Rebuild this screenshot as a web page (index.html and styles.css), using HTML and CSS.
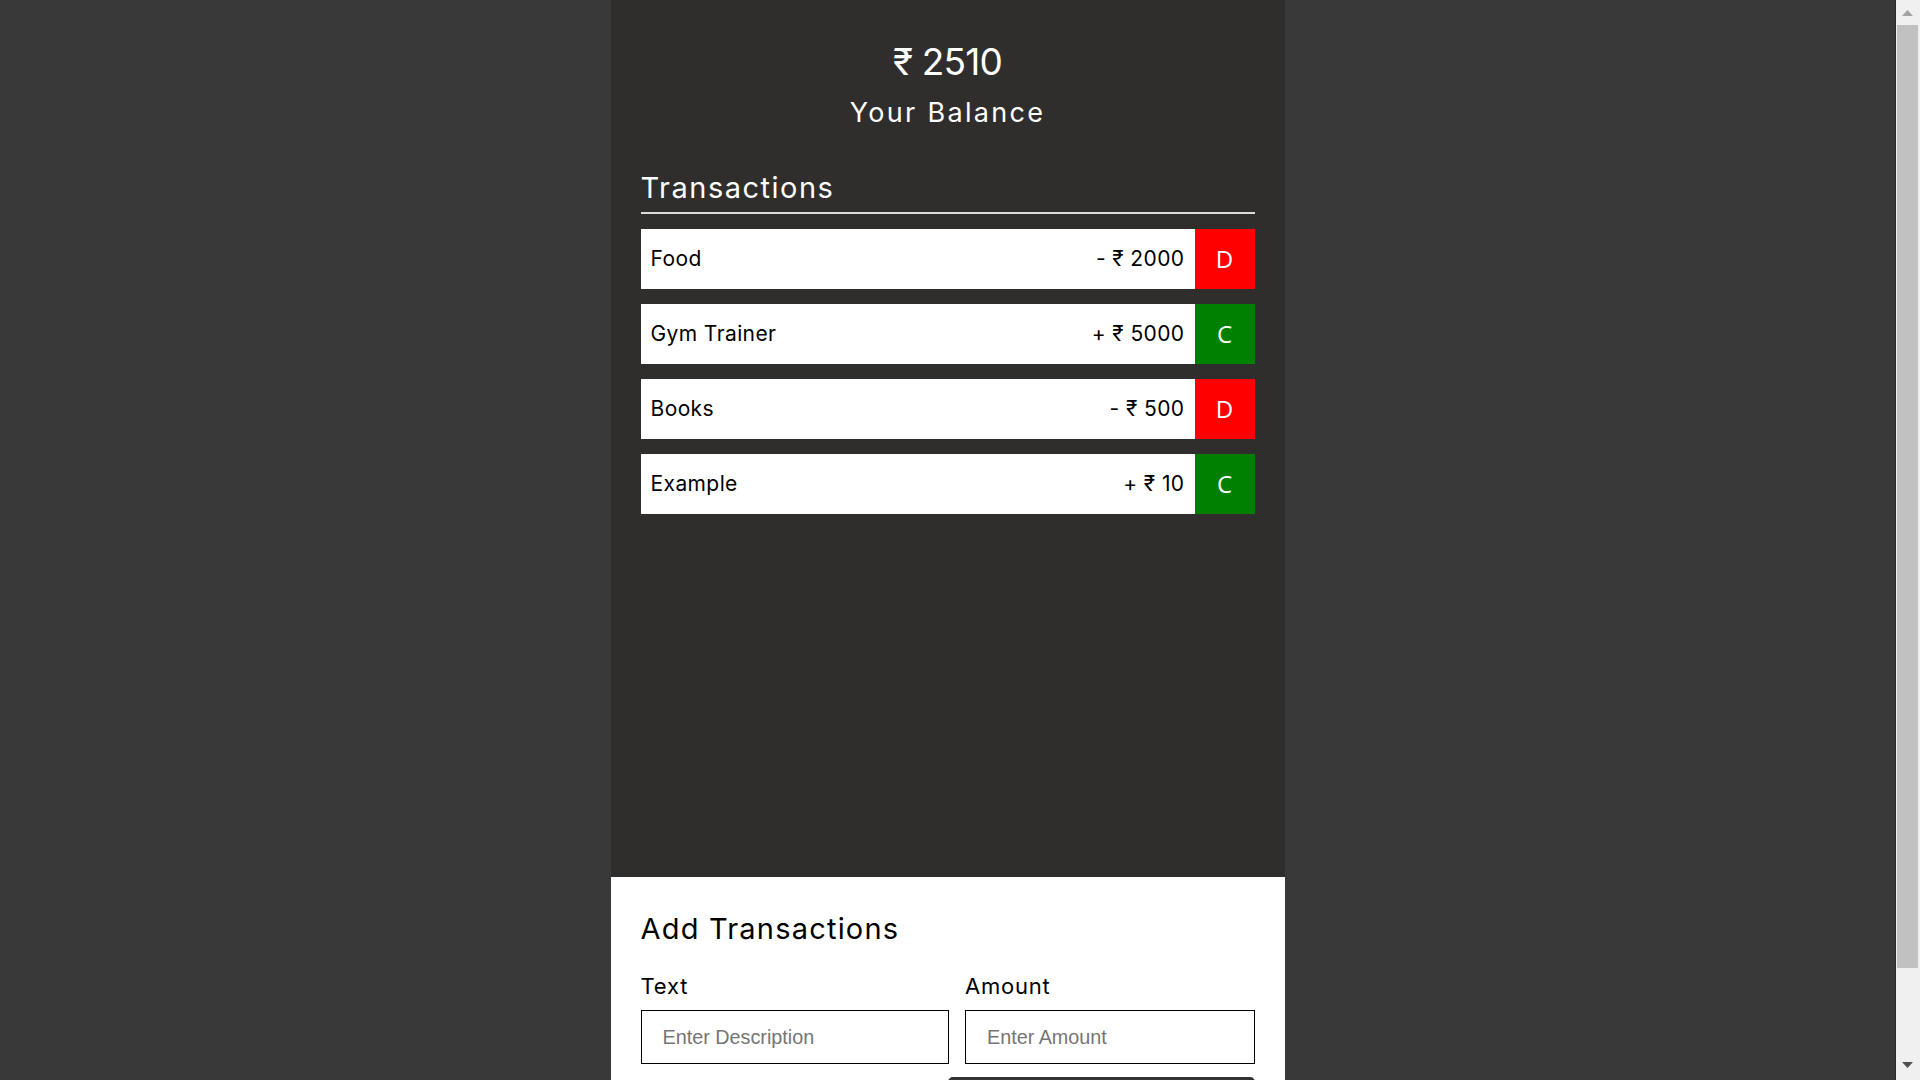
FILE: index.html
```html
<!DOCTYPE html>
<html lang="en">
<head>
<meta charset="utf-8">
<title>Expense Tracker</title>
<link rel="stylesheet" href="styles.css">
</head>
<body>
<div class="window">
  <div class="page">
    <main class="app">
      <section class="summary">
        <div class="balance">
          <h1 class="balance-amount">₹ 2510</h1>
          <p class="balance-label">Your Balance</p>
        </div>
        <div class="history">
          <h2 class="section-title">Transactions</h2>
          <ul class="list">
            <li class="item"><span class="item-text">Food</span><span class="item-amount">- ₹ 2000</span><span class="badge debit">D</span></li>
            <li class="item"><span class="item-text">Gym Trainer</span><span class="item-amount">+ ₹ 5000</span><span class="badge credit">C</span></li>
            <li class="item"><span class="item-text">Books</span><span class="item-amount">- ₹ 500</span><span class="badge debit">D</span></li>
            <li class="item"><span class="item-text">Example</span><span class="item-amount">+ ₹ 10</span><span class="badge credit">C</span></li>
          </ul>
        </div>
      </section>
      <section class="form-panel">
        <h2 class="form-title">Add Transactions</h2>
        <form class="form">
          <div class="fields">
            <label class="field"><span class="field-label">Text</span><input class="field-input" type="text" placeholder="Enter Description"></label>
            <label class="field"><span class="field-label">Amount</span><input class="field-input" type="text" placeholder="Enter Amount"></label>
          </div>
          <button class="submit" type="button">Add Transaction</button>
        </form>
      </section>
    </main>
  </div>
  <div class="scrollbar" aria-hidden="true">
    <div class="sb-btn sb-up"><svg width="11" height="6" viewBox="0 0 11 6"><polygon points="0,6 5.5,0 11,6" fill="#a3a3a3"/></svg></div>
    <div class="sb-thumb"></div>
    <div class="sb-space"></div>
    <div class="sb-btn sb-down"><svg width="11" height="6" viewBox="0 0 11 6"><polygon points="0,0 11,0 5.5,6" fill="#505050"/></svg></div>
  </div>
</div>
</body>
</html>
```

FILE: styles.css
```css
html, body {
  margin: 0;
  padding: 0;
}

body {
  background: #393939;
  font-family: "Inter", "Noto Sans", sans-serif;
  overflow: hidden;
}

.window {
  display: flex;
  height: 100vh;
  overflow: hidden;
}

.page {
  flex: 1;
  min-width: 0;
  overflow: hidden;
}

/* scrollbar drawn as part of the window frame */
.scrollbar {
  width: 25px;
  flex: none;
  background: #f0f0f0;
  display: flex;
  flex-direction: column;
  box-shadow: inset 1px 0 0 #2a2a2a;
}

.sb-btn {
  height: 25px;
  flex: none;
  display: flex;
  justify-content: center;
  align-items: flex-start;
  box-sizing: border-box;
}

.sb-up {
  padding-top: 10px;
}

.sb-down {
  padding-top: 7px;
}

.sb-btn svg {
  display: block;
}

.sb-thumb {
  height: 943px;
  flex: none;
  margin: 0 2px 0 2px;
  background: #c1c1c1;
}

.sb-space {
  flex: 1;
}

.app {
  width: 674px;
  margin: 0 auto;
}

.summary {
  background: #2f2e2c;
  min-height: 877px;
  box-sizing: border-box;
  padding: 40px 30px 20px;
  display: flex;
  flex-direction: column;
  color: #fff;
}

.balance {
  text-align: center;
}

.balance-amount {
  margin: 0;
  font-size: 37px;
  font-weight: 400;
  line-height: 1.2;
  letter-spacing: -0.8px;
}

.balance-label {
  margin: 13px 0 0;
  font-size: 27px;
  line-height: 1.2;
  letter-spacing: 2.3px;
}

.history {
  margin-top: 41px;
}

.section-title {
  margin: 0;
  font-size: 29px;
  font-weight: 400;
  line-height: 1.2;
  letter-spacing: 1.5px;
  padding-bottom: 6px;
  border-bottom: 2px solid #dcdcdc;
}

.list {
  list-style: none;
  margin: 15px 0 0;
  padding: 0;
  display: flex;
  flex-direction: column;
  gap: 15px;
}

.item {
  display: flex;
  align-items: center;
  height: 60px;
  background: #fff;
  color: #000;
  font-size: 21px;
  letter-spacing: 0.4px;
}

.item-text {
  flex: 1;
  padding-left: 10px;
}

.item-amount {
  padding-right: 10px;
}

.badge {
  width: 60px;
  align-self: stretch;
  display: flex;
  align-items: center;
  justify-content: center;
  color: #fff;
  font-family: "Open Sans", sans-serif;
  font-size: 24px;
  letter-spacing: 0;
}

.debit {
  background: #ff0000;
}

.credit {
  background: #008000;
}

.form-panel {
  background: #fff;
  padding: 35px 30px 54px;
  color: #000;
}

.form-title {
  margin: 0;
  font-size: 29px;
  font-weight: 400;
  line-height: 1.2;
  letter-spacing: 1.2px;
}

.form {
  margin-top: 26px;
  display: flex;
  flex-direction: column;
}

.fields {
  display: grid;
  grid-template-columns: minmax(0, 309fr) minmax(0, 290fr);
  column-gap: 16px;
}

.field {
  display: flex;
  flex-direction: column;
  min-width: 0;
}

.field-label {
  font-size: 22px;
  line-height: 1.2;
  letter-spacing: 0.8px;
  margin-bottom: 11px;
}

.field-input {
  box-sizing: border-box;
  width: 100%;
  min-width: 0;
  height: 54px;
  border: 1px solid #000;
  border-radius: 0;
  padding: 0 21px;
  font-family: "Liberation Sans", Arial, sans-serif;
  font-size: 19.8px;
  color: #000;
  outline: none;
}

.field-input::placeholder {
  color: #757575;
}

.submit {
  margin-top: 13px;
  align-self: flex-end;
  width: 50%;
  height: 54px;
  border: none;
  border-radius: 5px;
  background: #333;
  color: #fff;
  font-family: "Inter", sans-serif;
  font-size: 20px;
}
```
